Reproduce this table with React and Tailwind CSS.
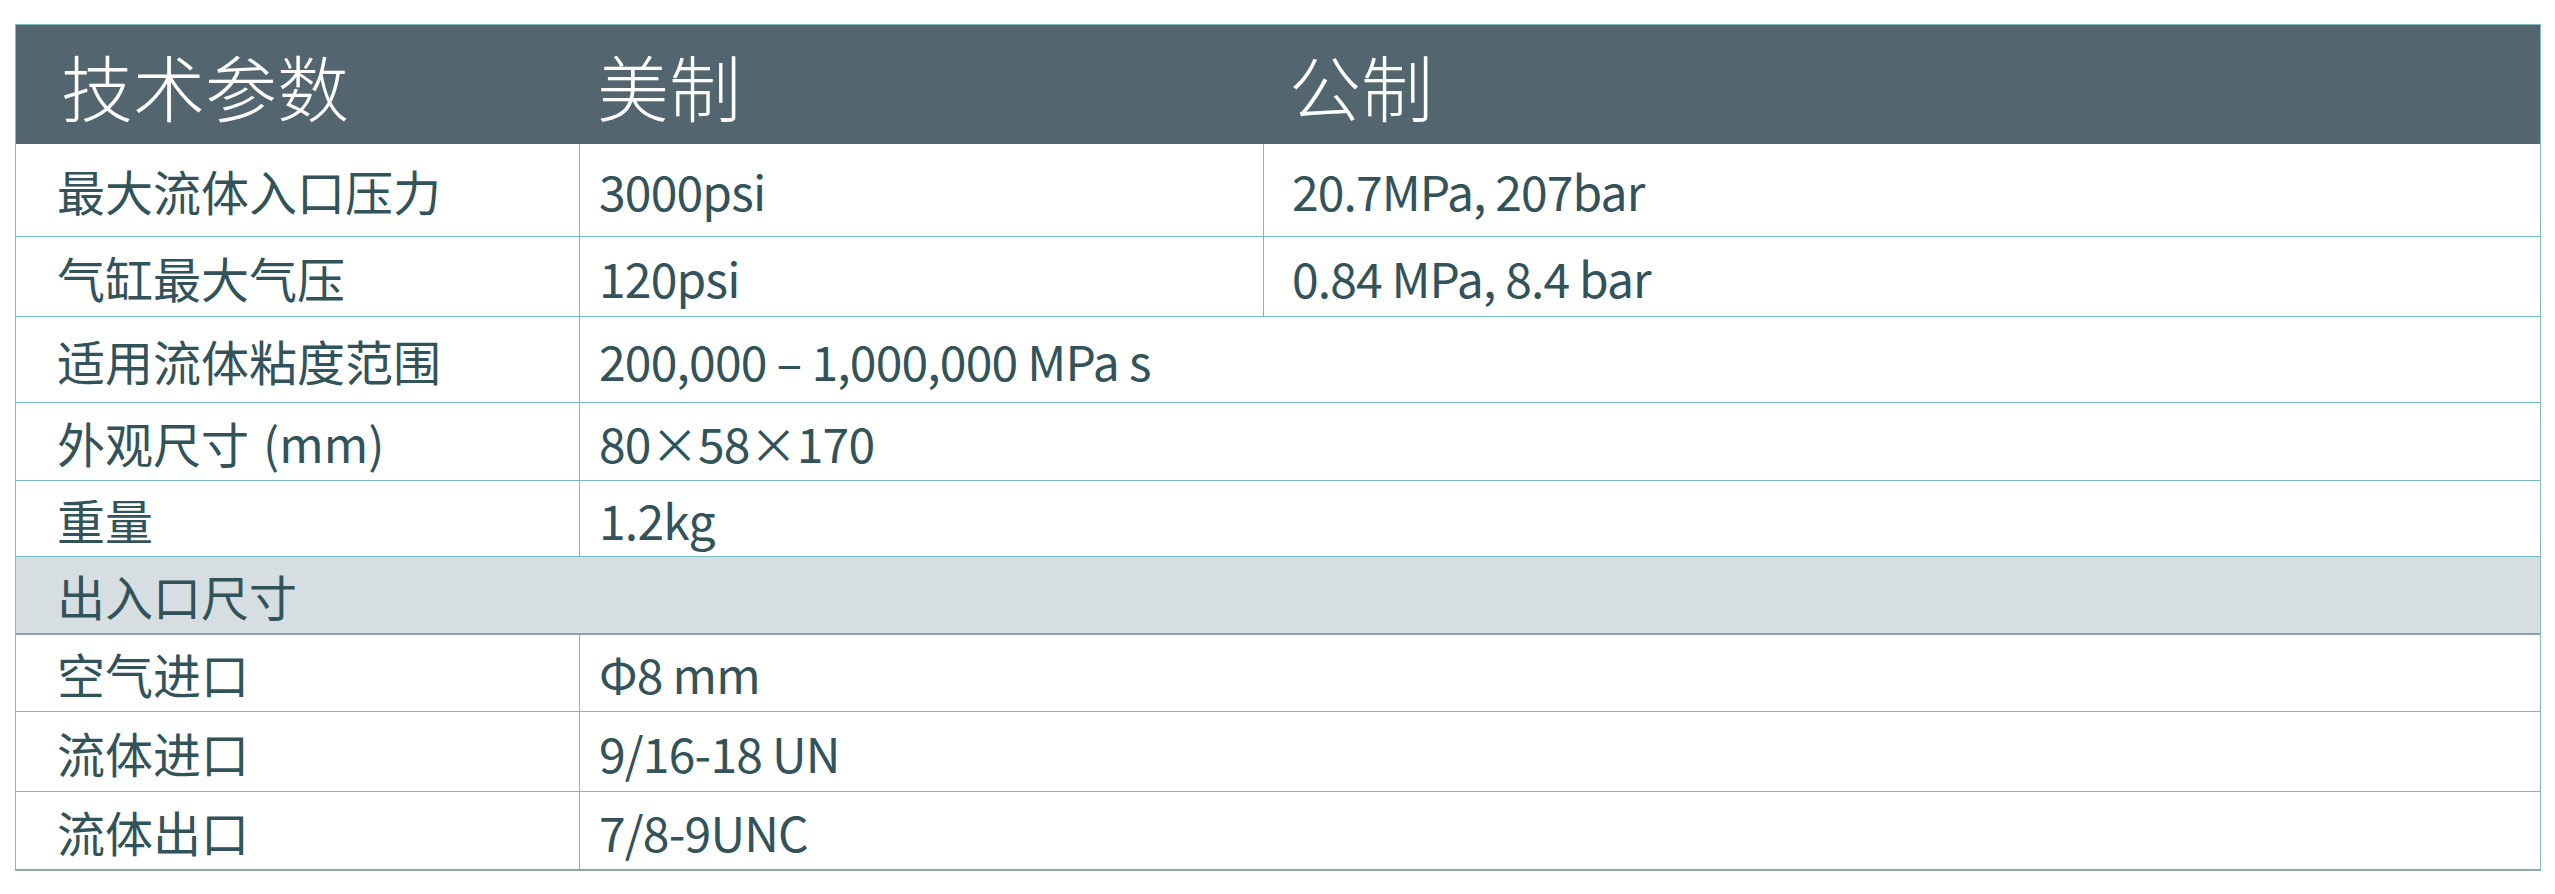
const rows = [
  { label: '最大流体入口压力', us: '3000psi', metric: '20.7MPa, 207bar', h: 'h-[93px]' },
  { label: '气缸最大气压', us: '120psi', metric: '0.84 MPa, 8.4 bar', h: 'h-[80px]' },
  { label: '适用流体粘度范围', value: '200,000 – 1,000,000 MPa s', h: 'h-[86px]' },
  { label: '外观尺寸', unit: '(mm)', value: '80×58×170', h: 'h-[78px]' },
  { label: '重量', value: '1.2kg', h: 'h-[76px]' },
];

const ports = [
  { label: '空气进口', value: 'Φ8 mm', h: 'h-[77px]' },
  { label: '流体进口', value: '9/16-18 UN', h: 'h-[80px]' },
  { label: '流体出口', value: '7/8-9UNC', h: 'h-[77px]' },
];

function Row({ r, last }) {
  return (
    <div className={`grid grid-cols-[563px_684px_1fr] ${r.h} ${last ? '' : 'border-b border-[#74bcc3]'}`}>
      <div className="flex items-center pl-[41px]">
        {r.label}
        {r.unit && <span className="ml-[14px]">{r.unit}</span>}
      </div>
      {r.value ? (
        <div className="col-span-2 flex items-center pl-[19px] border-l border-[#74bcc3] tracking-[-0.8px]">{r.value}</div>
      ) : (
        <>
          <div className="flex items-center pl-[19px] border-l border-[#74bcc3] tracking-[-0.8px]">{r.us}</div>
          <div className="flex items-center pl-[28px] border-l border-[#74bcc3] tracking-[-0.9px]">{r.metric}</div>
        </>
      )}
    </div>
  );
}

export default function App() {
  return (
    <div className="w-[2555px] h-[894px] bg-white pt-[24px] pl-[15px]"
      style={{ fontFamily: '"Noto Sans CJK SC", "Noto Sans", sans-serif' }}>
      <div className="w-[2526px] border border-[#7fb8be] border-b-2 border-b-[#8ca6ab] text-[48px] leading-none text-[#33535a]">
        {/* 表头 */}
        <div className="grid grid-cols-[581px_692px_1fr] h-[119px] bg-[#53656e] text-white text-[72px] font-light items-center">
          <div className="pl-[45px]">技术参数</div>
          <div>美制</div>
          <div>公制</div>
        </div>

        {rows.map((r) => <Row key={r.label} r={r} />)}

        {/* 出入口尺寸 */}
        <div className="h-[78px] flex items-center pl-[41px] bg-[#d6dee1] border-b-2 border-[#86a4a9]">
          出入口尺寸
        </div>

        {ports.map((r, i) => <Row key={r.label} r={r} last={i === ports.length - 1} />)}
      </div>
    </div>
  );
}
